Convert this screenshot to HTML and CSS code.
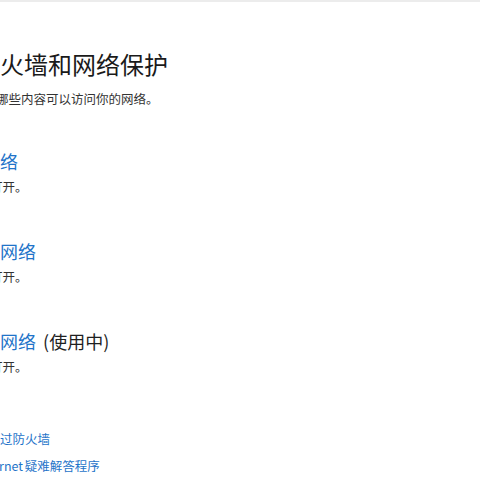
FILE: index.html
```html
<!DOCTYPE html>
<html lang="zh-CN">
<head>
<meta charset="utf-8">
<title>防火墙和网络保护</title>
<link rel="stylesheet" href="styles.css">
</head>
<body>
<div class="topbar"></div>
<main class="page">
  <h1 class="title">防火墙和网络保护</h1>
  <p class="subtitle">哪些人和哪些内容可以访问你的网络。</p>

  <section class="net">
    <h2 class="net-name"><a class="link">域网络</a></h2>
    <p class="net-status">防火墙已打开。</p>
  </section>

  <section class="net">
    <h2 class="net-name"><a class="link">专用网络</a></h2>
    <p class="net-status">防火墙已打开。</p>
  </section>

  <section class="net">
    <h2 class="net-name"><a class="link">公用网络</a> <span class="inuse">(使用中)</span></h2>
    <p class="net-status">防火墙已打开。</p>
  </section>

  <ul class="links">
    <li class="l1"><a class="link">允许应用通过防火墙</a></li>
    <li class="l2"><a class="link">网络和 Internet 疑难解答程序</a></li>
  </ul>
</main>
</body>
</html>
```

FILE: styles.css
```css
html, body {
  margin: 0;
  padding: 0;
  width: 480px;
  height: 480px;
  overflow: hidden;
  background: #ffffff;
}

body {
  font-family: "Noto Sans CJK SC", "Noto Sans", sans-serif;
  color: #1f1f1f;
}

.topbar {
  height: 2px;
  background: #ececec;
}

.page {
  padding-top: 45.5px;
  white-space: nowrap;
}

.title {
  margin: 0 0 9px -24px;
  font-size: 24px;
  line-height: 32px;
  font-weight: 400;
  color: #1a1a1a;
}

.subtitle {
  margin: 0 0 40px -54px;
  font-size: 12.5px;
  line-height: 20px;
  color: #333333;
}

.net {
  margin-bottom: 41.7px;
}

.net-name {
  margin: 0 0 4.5px -36px;
  font-size: 18px;
  line-height: 24px;
  font-weight: 400;
}

.link {
  color: #1f74c9;
  text-decoration: none;
}

.inuse {
  color: #1f1f1f;
  margin-left: 3px;
}

.net-status {
  margin: 0 0 0 -60px;
  font-size: 12.5px;
  line-height: 20px;
  color: #333333;
}

.links {
  list-style: none;
  margin: 0;
  padding: 9.8px 0 0;
  font-size: 12.5px;
  line-height: 20px;
}

.links .l1 {
  margin-left: -62.5px;
  margin-bottom: 7px;
}

.links .l2 {
  margin-left: -63px;
  word-spacing: -1px;
}
```
